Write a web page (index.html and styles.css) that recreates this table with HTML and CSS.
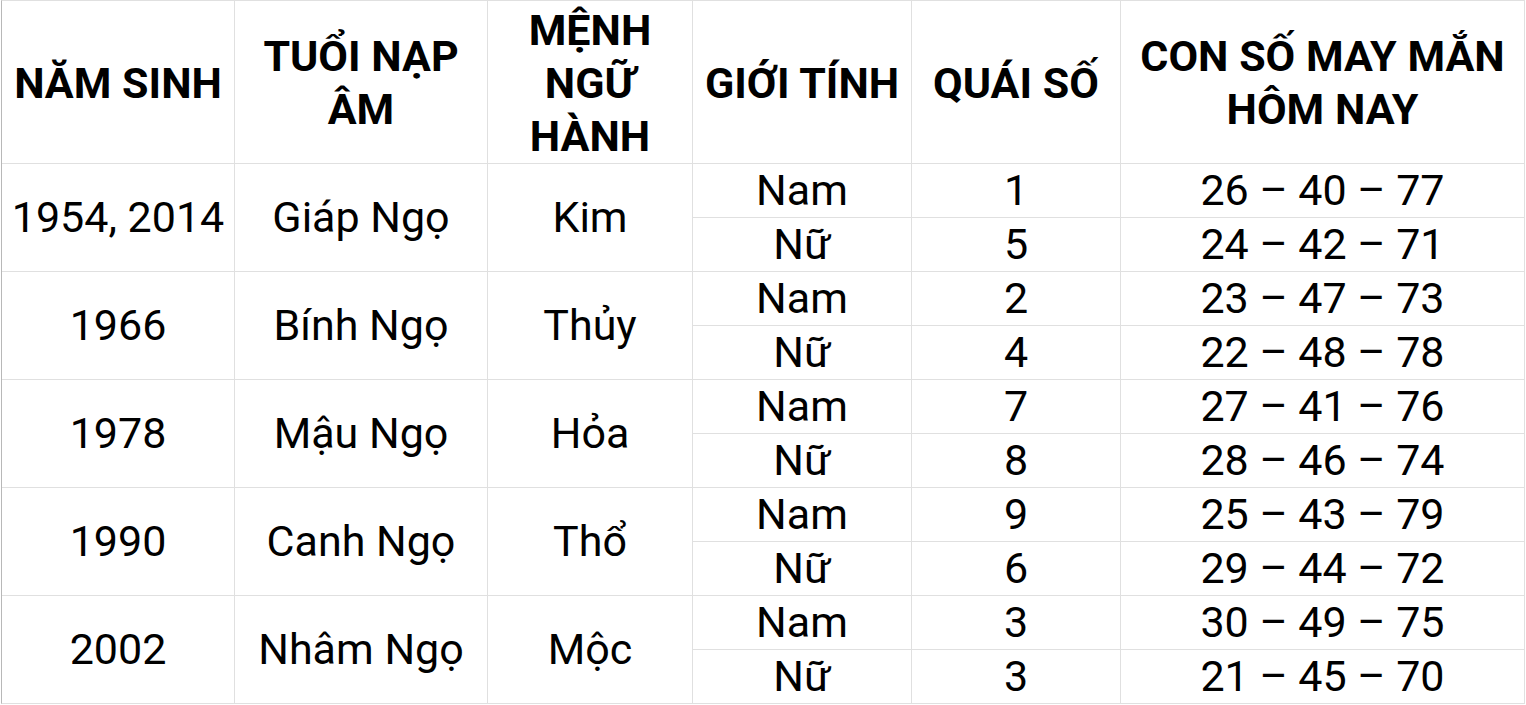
FILE: index.html
```html
<!DOCTYPE html>
<html lang="vi">
<head>
<meta charset="utf-8">
<title>Con số may mắn</title>
<link rel="stylesheet" href="styles.css">
</head>
<body>
<div class="sheet">
  <div class="cell head">NĂM SINH</div>
  <div class="cell head">TUỔI NẠP<br>ÂM</div>
  <div class="cell head">MỆNH<br>NGỮ<br>HÀNH</div>
  <div class="cell head">GIỚI TÍNH</div>
  <div class="cell head">QUÁI SỐ</div>
  <div class="cell head">CON SỐ MAY MẮN<br>HÔM NAY</div>

  <div class="cell span2">1954, 2014</div>
  <div class="cell span2">Giáp Ngọ</div>
  <div class="cell span2">Kim</div>
  <div class="cell">Nam</div><div class="cell">1</div><div class="cell">26 – 40 – 77</div>
  <div class="cell">Nữ</div><div class="cell">5</div><div class="cell">24 – 42 – 71</div>

  <div class="cell span2">1966</div>
  <div class="cell span2">Bính Ngọ</div>
  <div class="cell span2">Thủy</div>
  <div class="cell">Nam</div><div class="cell">2</div><div class="cell">23 – 47 – 73</div>
  <div class="cell">Nữ</div><div class="cell">4</div><div class="cell">22 – 48 – 78</div>

  <div class="cell span2">1978</div>
  <div class="cell span2">Mậu Ngọ</div>
  <div class="cell span2">Hỏa</div>
  <div class="cell">Nam</div><div class="cell">7</div><div class="cell">27 – 41 – 76</div>
  <div class="cell">Nữ</div><div class="cell">8</div><div class="cell">28 – 46 – 74</div>

  <div class="cell span2">1990</div>
  <div class="cell span2">Canh Ngọ</div>
  <div class="cell span2">Thổ</div>
  <div class="cell">Nam</div><div class="cell">9</div><div class="cell">25 – 43 – 79</div>
  <div class="cell">Nữ</div><div class="cell">6</div><div class="cell">29 – 44 – 72</div>

  <div class="cell span2">2002</div>
  <div class="cell span2">Nhâm Ngọ</div>
  <div class="cell span2">Mộc</div>
  <div class="cell">Nam</div><div class="cell">3</div><div class="cell">30 – 49 – 75</div>
  <div class="cell">Nữ</div><div class="cell">3</div><div class="cell">21 – 45 – 70</div>
</div>
</body>
</html>
```

FILE: styles.css
```css
html, body {
  margin: 0;
  padding: 0;
  background: #ffffff;
}

body {
  padding-left: 1px;
  font-family: Roboto, "Noto Sans", "Liberation Sans", sans-serif;
  color: #000000;
}

.sheet {
  display: grid;
  grid-template-columns: 232px 252px 204px 218px 208px 403px;
  grid-template-rows: 162px repeat(10, 53px);
  gap: 1px;
  width: max-content;
  background: #e0e0e0;
  border-top: 1px solid #e0e0e0;
  border-right: 1px solid #e0e0e0;
  border-bottom: 1px solid #e0e0e0;
  border-left: 1px solid #b8b8b8;
}

.cell {
  background: #ffffff;
  display: flex;
  align-items: center;
  justify-content: center;
  text-align: center;
  font-size: 43px;
  line-height: 53px;
  white-space: nowrap;
}

.head {
  font-weight: 700;
  font-size: 43px;
  line-height: 53px;
  padding-top: 2px;
}

.span2 {
  grid-row: span 2;
}
```
